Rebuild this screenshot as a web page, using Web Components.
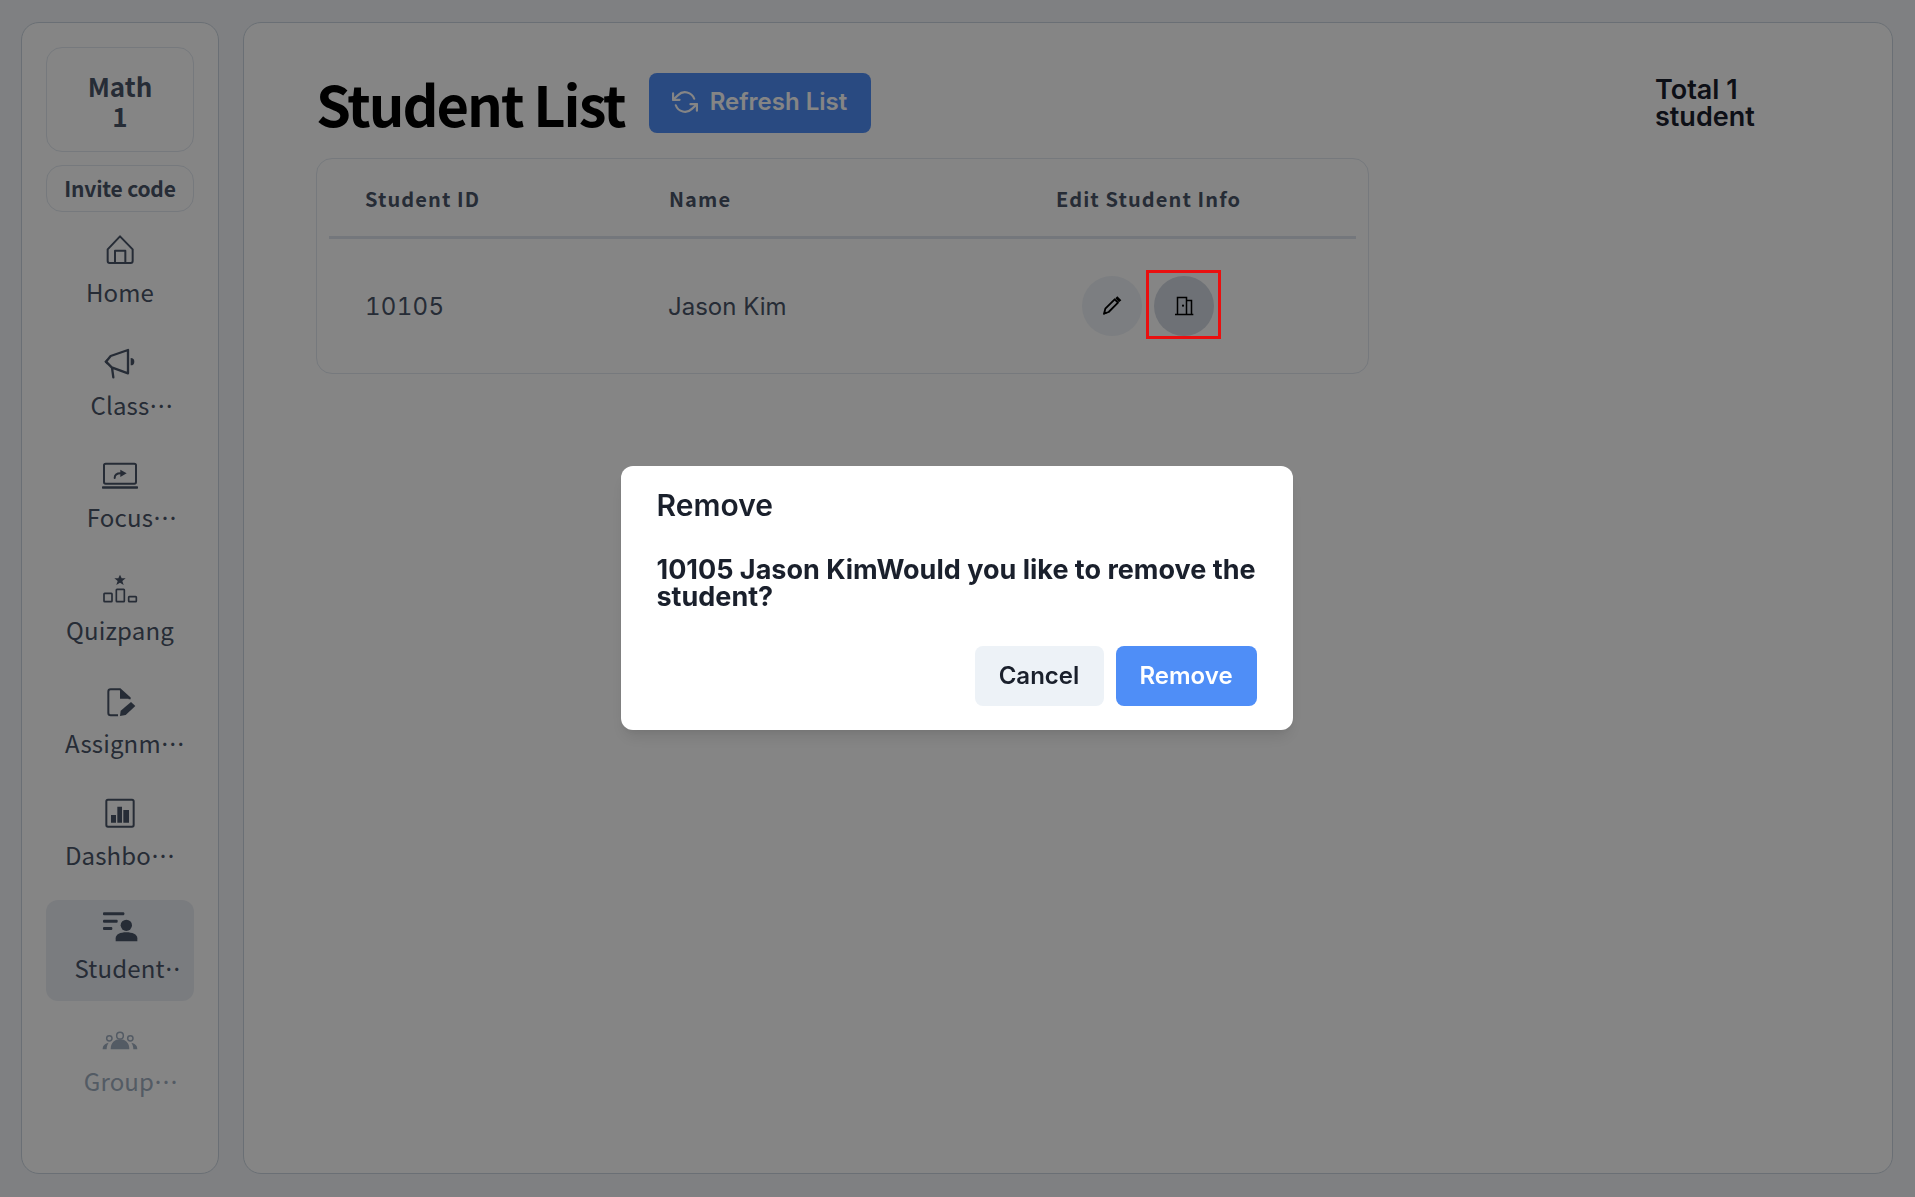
<!DOCTYPE html>
<html lang="en">
<head>
<meta charset="utf-8">
<title>Student List</title>
<style>
  html, body { margin: 0; height: 100%; }
  body {
    background: #f4f6f9;
    font-family: "Noto Sans CJK KR", "Noto Sans", sans-serif;
    color: #4a5568;
  }
</style>
</head>
<body>
<class-page></class-page>

<script>
const ICONS = {
  home: `<svg viewBox="300 702 120 102"><path d="M323 748 360 709 398 748V783a6 6 0 0 1-6 6H329a6 6 0 0 1-6-6Z M345 789V752H376V789" fill="none" stroke="currentColor" stroke-width="6" stroke-linejoin="round"/></svg>`,
  megaphone: `<svg viewBox="300 1041 120 102"><path d="M384 1050V1120L335 1102 318 1085 332 1068Z M336 1103 340 1132" fill="none" stroke="currentColor" stroke-width="7" stroke-linejoin="round" stroke-linecap="round"/><path d="M392 1074a11 11 0 0 1 0 22Z M322 1076l-9 9 9 9Z" fill="currentColor"/></svg>`,
  laptop: `<svg viewBox="300 117 120 102"><rect x="312" y="131" width="96" height="60" rx="5" fill="none" stroke="currentColor" stroke-width="6"/><rect x="306" y="199" width="108" height="7" rx="2" fill="currentColor"/><path d="M344 174c0-10 6-14 18-14" fill="none" stroke="currentColor" stroke-width="6" stroke-linecap="round"/><path d="M361 149l19 11-19 11Z" fill="currentColor"/></svg>`,
  podium: `<svg viewBox="300 459 120 102"><path d="M360 467l5 11h12l-10 8 4 12-11-7-11 7 4-12-10-8h12Z" fill="currentColor"/><g fill="none" stroke="currentColor" stroke-width="5"><rect x="312" y="523" width="24" height="25" rx="2"/><rect x="349" y="511" width="24" height="37" rx="2"/><rect x="386" y="533" width="23" height="15" rx="2"/></g></svg>`,
  assignment: `<svg viewBox="300 795 120 102"><path d="M354 886H332a7 7 0 0 1-7-7V815a7 7 0 0 1 7-7H360L389 834V838" fill="none" stroke="currentColor" stroke-width="6"/><path d="M360 808V836H389Z" fill="currentColor"/><path d="M360 888 362 872 393 846 406 858 377 885Z" fill="currentColor"/></svg>`,
  dashboard: `<svg viewBox="300 1133 120 102"><rect x="319" y="1141" width="82" height="81" rx="5" fill="none" stroke="currentColor" stroke-width="6"/><path d="M333 1187h15v23h-15Z M352 1162h14v48h-14Z M370 1172h17v38h-17Z" fill="currentColor"/></svg>`,
  students: `<svg viewBox="300 330 120 102"><g fill="currentColor"><rect x="309" y="337" width="64" height="9" rx="3"/><rect x="309" y="359" width="44" height="9" rx="3"/><rect x="309" y="381" width="28" height="9" rx="3"/><circle cx="379" cy="376" r="17"/><path d="M347 424V415c0-12 14-18 32-18s33 6 33 18v9Z"/></g></svg>`,
  groups: `<svg viewBox="300 669 120 102"><g fill="currentColor"><path d="M332 748c0-20 12-30 28-30s28 10 28 30Z"/><path d="M308 748c0-10 5-17 18-20-4 6-6 12-6 20Z M412 748c0-10-5-17-18-20 4 6 6 12 6 20Z"/></g><g fill="none" stroke="currentColor" stroke-width="4.5"><circle cx="360" cy="707" r="10"/><circle cx="328" cy="715" r="8"/><circle cx="391" cy="715" r="8"/></g></svg>`
};

class NavItem extends HTMLElement {
  constructor() {
    super();
    this.attachShadow({ mode: 'open' });
  }

  connectedCallback() {
    const shift = this.getAttribute('shift') || 0;
    const clip = this.getAttribute('clip');
    this.shadowRoot.innerHTML = `
      <style>
        :host {
          display: flex;
          flex-direction: column;
          align-items: center;
          box-sizing: border-box;
          height: 100.7px;
          padding-top: 10px;
          border-radius: 12px;
          color: #4a5568;
        }
        :host([active]) { background: #eaeef4; }
        :host([dim]) { color: #a0aec0; }
        svg { width: 40px; height: 34px; display: block; }
        .label {
          margin-top: 8px;
          padding-left: ${shift * 2}px;
          font-size: 24px;
          letter-spacing: 0.15px;
          line-height: 32px;
          white-space: nowrap;
          ${clip ? `max-width: ${clip}px; overflow: hidden;` : ''}
        }
      </style>
      ${ICONS[this.getAttribute('icon')]}
      <div class="label" lang="ko"><slot></slot></div>
    `;
  }
}
customElements.define('nav-item', NavItem);

class SideNav extends HTMLElement {
  constructor() {
    super();
    this.attachShadow({ mode: 'open' });
    this.shadowRoot.innerHTML = `
      <style>
        :host {
          display: flex;
          flex-direction: column;
          box-sizing: border-box;
          width: 198px;
          flex: none;
          padding: 24px 24px;
          background: #fff;
          border: 1px solid #cbd5e0;
          border-radius: 18px;
        }
        .class-card, .invite {
          border: 1px solid #e2e8f0;
          border-radius: 16px;
          text-align: center;
          font-weight: 700;
          color: #4a5568;
        }
        .class-card {
          height: 105px;
          box-sizing: border-box;
          padding-top: 23px;
          font-size: 26px;
          line-height: 30px;
          margin-bottom: 13px;
        }
        .invite {
          height: 47px;
          box-sizing: border-box;
          font-size: 21px;
          letter-spacing: -0.2px;
          line-height: 44px;
          margin-bottom: 12px;
        }
        .items { display: flex; flex-direction: column; gap: 12px; }
      </style>
      <div class="class-card">Math<br>1</div>
      <div class="invite">Invite code</div>
      <div class="items"><slot></slot></div>
    `;
  }
}
customElements.define('side-nav', SideNav);

class RoundButton extends HTMLElement {
  constructor() {
    super();
    this.attachShadow({ mode: 'open' });
    this.shadowRoot.innerHTML = `
      <style>
        :host {
          display: flex;
          align-items: center;
          justify-content: center;
          position: relative;
          width: 60px;
          height: 60px;
          border-radius: 50%;
          background: #edf2f7;
          color: #000;
        }
        :host([pressed]) { background: #d3d9e2; }
        :host([highlight]) .mark { display: block; }
        .mark {
          display: none;
          position: absolute;
          left: -8px;
          top: -6px;
          width: 69px;
          height: 63px;
          border: 3px solid #ea0f0f;
          z-index: 30;
        }
      </style>
      <slot></slot>
      <div class="mark"></div>
    `;
  }
}
customElements.define('round-button', RoundButton);

class StudentTable extends HTMLElement {
  constructor() {
    super();
    this.attachShadow({ mode: 'open' });
    this.shadowRoot.innerHTML = `
      <style>
        :host {
          display: block;
          width: 1053px;
          box-sizing: border-box;
          padding: 0 12px;
          background: #fff;
          border: 1px solid #e2e8f0;
          border-radius: 16px;
        }
        .row {
          display: grid;
          grid-template-columns: 304px 387px 1fr;
          align-items: center;
        }
        .head {
          box-sizing: border-box;
          height: 80px;
          padding-top: 2px;
          border-bottom: 3px solid #dfe5ee;
          font-weight: 700;
          font-size: 20px;
          letter-spacing: 1.1px;
          color: #4a5568;
        }
        .body {
          height: 134px;
          font-family: Inter, sans-serif;
          font-size: 24px;
          color: #4a5568;
        }
        .num { font-variant-numeric: tabular-nums; letter-spacing: 0.3px; }
        .name { margin-left: -1px; }
        .cell { padding-left: 36px; }
        .actions {
          display: flex;
          gap: 12px;
          margin-left: 62px;
        }
        svg { width: 24px; height: 24px; display: block; }
      </style>
      <div class="row head">
        <div class="cell">Student ID</div>
        <div class="cell">Name</div>
        <div class="cell">Edit Student Info</div>
      </div>
      <div class="row body">
        <div class="cell num">10105</div>
        <div class="cell name">Jason Kim</div>
        <div class="actions">
          <round-button>
            <svg viewBox="180 372 72 72"><path d="M192 431 196 416 224 388 234 398 206 426Z" fill="none" stroke="currentColor" stroke-width="5.5" stroke-linejoin="round"/><path d="M226 385 232 379 244 391 237 397Z M190 434l4-11 7 7Z" fill="currentColor"/></svg>
          </round-button>
          <round-button pressed highlight>
            <svg viewBox="396 372 72 72"><path d="M405 433.5H460M412.5 433.5V382.5H439.5V433.5M439.5 391.5H454.5V433.5" fill="none" stroke="currentColor" stroke-width="4.5"/><circle cx="429" cy="407" r="3.2" fill="currentColor"/></svg>
          </round-button>
        </div>
      </div>
    `;
  }
}
customElements.define('student-table', StudentTable);

class ConfirmDialog extends HTMLElement {
  constructor() {
    super();
    this.attachShadow({ mode: 'open' });
    this.shadowRoot.innerHTML = `
      <style>
        :host {
          position: fixed;
          inset: 0;
          z-index: 20;
          display: flex;
          align-items: center;
          justify-content: center;
          padding: 0 2px 2px 0;
          background: rgba(0, 0, 0, 0.48);
          font-family: Inter, sans-serif;
          color: #1a202c;
        }
        .box {
          width: 672px;
          height: 264px;
          box-sizing: border-box;
          padding: 21px 36px 24px;
          background: #fff;
          border-radius: 12px;
          box-shadow: 0 10px 15px -3px rgba(0, 0, 0, 0.1), 0 4px 6px -2px rgba(0, 0, 0, 0.05);
          display: flex;
          flex-direction: column;
        }
        .title { font-size: 30px; font-weight: 600; line-height: 36px; }
        .text {
          margin-top: 33px;
          font-size: 27px;
          font-weight: 700;
          line-height: 27px;
        }
        .foot { margin-top: auto; display: flex; justify-content: flex-end; gap: 12px; }
        button {
          height: 60px;
          padding: 0;
          border: 0;
          border-radius: 8px;
          font: 600 24px Inter, sans-serif;
        }
        .cancel { width: 129px; background: #edf2f7; color: #1a202c; }
        .ok { width: 141px; background: #4f8ef7; color: #fff; }
      </style>
      <div class="box">
        <div class="title">Remove</div>
        <div class="text">10105 Jason KimWould you like to remove the student?</div>
        <div class="foot">
          <button class="cancel">Cancel</button>
          <button class="ok">Remove</button>
        </div>
      </div>
    `;
  }
}
customElements.define('confirm-dialog', ConfirmDialog);

class ClassPage extends HTMLElement {
  constructor() {
    super();
    this.attachShadow({ mode: 'open' });
    this.shadowRoot.innerHTML = `
      <style>
        :host {
          display: flex;
          gap: 24px;
          box-sizing: border-box;
          height: 1197px;
          padding: 22px 22px 23px 21px;
        }
        main {
          flex: 1;
          box-sizing: border-box;
          padding: 50px 72px 0;
          background: #fff;
          border: 1px solid #cbd5e0;
          border-radius: 18px;
        }
        header {
          display: flex;
          align-items: center;
          gap: 24px;
          height: 60px;
          margin-bottom: 25px;
        }
        h1 {
          margin: 0;
          font-size: 56px;
          font-weight: 700;
          letter-spacing: -2px;
          line-height: 60px;
          color: #000;
        }
        .refresh {
          display: flex;
          align-items: center;
          gap: 12px;
          height: 60px;
          box-sizing: border-box;
          padding: 0 24px 3px 23px;
          border-radius: 8px;
          background: #4f8ef7;
          color: #fff;
          font: 600 24px Inter, sans-serif;
        }
        .refresh svg { width: 26px; height: 26px; }
        .total {
          margin-left: auto;
          width: 165px;
          font: 600 27px/27px Inter, sans-serif;
          color: #1a202c;
        }
      </style>
      <side-nav>
        <nav-item icon="home">Home</nav-item>
        <nav-item icon="megaphone" shift="12">Class⋯</nav-item>
        <nav-item icon="laptop" shift="12">Focus⋯</nav-item>
        <nav-item icon="podium">Quizpang</nav-item>
        <nav-item icon="assignment" shift="5">Assignm⋯</nav-item>
        <nav-item icon="dashboard">Dashbo⋯</nav-item>
        <nav-item icon="students" active shift="7.75" clip="106.5">Student⋯</nav-item>
        <nav-item icon="groups" dim shift="11">Group⋯</nav-item>
      </side-nav>
      <main>
        <header>
          <h1>Student List</h1>
          <div class="refresh">
            <svg viewBox="0 0 24 24" fill="none" stroke="currentColor" stroke-width="2" stroke-linecap="round" stroke-linejoin="round"><path d="M1 4v6h6M23 20v-6h-6"/><path d="M20.49 9A9 9 0 0 0 5.64 5.64L1 10m22 4-4.64 4.36A9 9 0 0 1 3.51 15"/></svg>
            Refresh List
          </div>
          <div class="total">Total 1 student</div>
        </header>
        <student-table></student-table>
      </main>
      <confirm-dialog></confirm-dialog>
    `;
  }
}
customElements.define('class-page', ClassPage);
</script>
</body>
</html>
